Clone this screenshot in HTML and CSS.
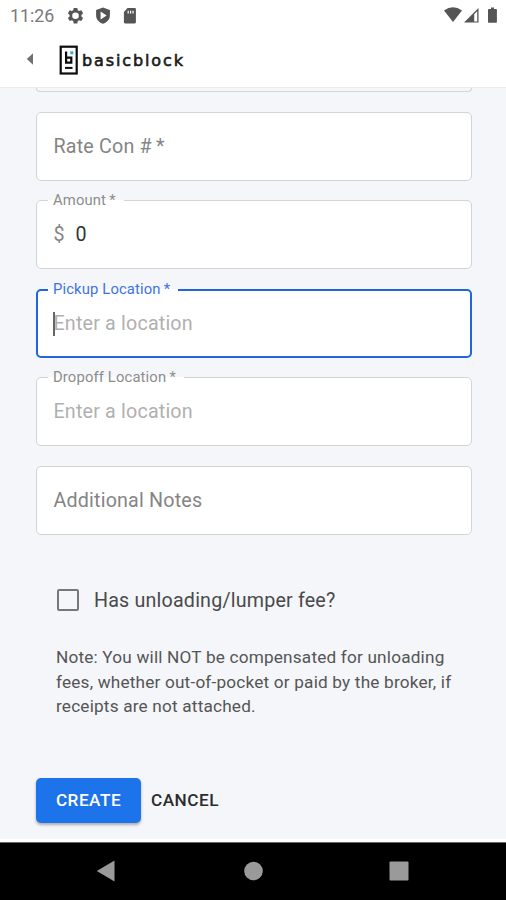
FILE: index.html
```html
<!DOCTYPE html>
<html lang="en">
<head>
<meta charset="utf-8">
<title>basicblock</title>
<link rel="stylesheet" href="styles.css">
</head>
<body>
<div class="screen">
  <header class="top">
    <div class="status">
      <span class="time">11:26</span>
      <svg class="status-left" width="72" height="18" viewBox="0 0 72 18" fill="#555">
        <path fill-rule="evenodd" d="M6.700 1h3.600l.5 2.300 1.300.8 2.200-.8 1.800 3-1.700 1.600v1.600l1.700 1.600-1.800 3-2.200-.8-1.300.8-.5 2.300H6.700l-.5-2.300-1.300-.8-2.200.8-1.800-3 1.700-1.600V7.900L.9 6.300l1.800-3 2.200.8 1.300-.8zM8.500 5.400a3.300 3.300 0 1 0 0 6.600 3.300 3.300 0 0 0 0-6.600z"/>
        <path fill-rule="evenodd" d="M36 .6l6.900 2.400v5.500c0 3.900-2.800 6.900-6.900 8.200-4.100-1.300-6.900-4.300-6.900-8.200V3zM33.600 4.500v8l6-4z"/>
        <path fill-rule="evenodd" d="M67.700 1h-7.200L56.900 5v10.300c0 .7.500 1.200 1.200 1.200h9.600c.7 0 1.200-.5 1.200-1.200V2.200c0-.7-.5-1.200-1.200-1.200zM60.600 3.800h1.200v2.800h-1.200zM63 3.800h1.200v2.800H63zM65.400 3.800h1.200v2.800h-1.200z"/>
      </svg>
      <svg class="status-right" width="54" height="17" viewBox="0 0 54 17" fill="#555">
        <path d="M0 3.600Q9-3 18 3.600L9 15z"/>
        <path d="M20 15.500L34.500 1v14.500z"/>
        <path d="M30.200 7.200l3-3v10.200h-3z" fill="#fff"/>
        <path d="M45 2h2V.5h3V2h1.900c.6 0 1 .4 1 1v11.700c0 .6-.4 1-1 1H45c-.6 0-1-.4-1-1V3c0-.6.4-1 1-1z"/>
      </svg>
    </div>
    <div class="brand">
      <svg class="back" width="8" height="12" viewBox="0 0 8 12"><path d="M7 .3v11.400L.8 6z" fill="#707070"/></svg>
      <svg class="mark" width="20" height="30" viewBox="0 0 20 30">
        <rect x="1.700" y="1.700" width="16" height="26.800" fill="#fff" stroke="#0b0b0b" stroke-width="2.200"/>
        <path d="M7.100 6.500v11.200h5.200v-5H7.100" fill="none" stroke="#0b0b0b" stroke-width="2.200"/>
        <path d="M6 22.900h7.500" stroke="#0b0b0b" stroke-width="2"/>
        <rect x="11.300" y="6.300" width="3" height="3" fill="#35a9df"/>
      </svg>
      <svg class="word" width="104" height="20" viewBox="0 0 104 20"><text x="0" y="15" textLength="101" lengthAdjust="spacing">basicblock</text></svg>
    </div>
  </header>

  <main class="page">
    <form class="form">
      <div class="field clipped"></div>
      <div class="field"><span class="label">Rate Con #&thinsp;*</span></div>
      <div class="field"><span class="legend">Amount&thinsp;*</span><span class="prefix">$</span><span class="value">0</span></div>
      <div class="field focused"><span class="legend">Pickup Location&thinsp;*</span><span class="caret"></span><span class="hint">Enter a location</span></div>
      <div class="field"><span class="legend">Dropoff Location&thinsp;*</span><span class="hint">Enter a location</span></div>
      <div class="field"><span class="label">Additional Notes</span></div>
    </form>
    <div class="check"><span class="box"></span><span>Has unloading/lumper fee?</span></div>
    <p class="note">Note: You will NOT be compensated for unloading<br>fees, whether out-of-pocket or paid by the broker, if<br>receipts are not attached.</p>
    <div class="actions"><button class="create">CREATE</button><button class="cancel">CANCEL</button></div>
  </main>

  <nav class="nav">
    <svg width="20" height="22" viewBox="0 0 20 22"><path d="M18.500.5v21L.8 11z" fill="#9a9a9a"/></svg>
    <svg width="20" height="20" viewBox="0 0 20 20"><circle cx="10.500" cy="10" r="9.300" fill="#9a9a9a"/></svg>
    <svg width="20" height="20" viewBox="0 0 20 20"><rect x=".5" y=".5" width="19" height="19" rx="1" fill="#9a9a9a"/></svg>
  </nav>
</div>
</body>
</html>
```
FILE: styles.css
```css
* { box-sizing: border-box; }
body { margin: 0; font-family: Roboto, sans-serif; }
.screen { width: 506px; height: 900px; display: flex; flex-direction: column; background: #f4f6fa; overflow: hidden; }
.top { height: 88px; flex: none; background: #fff; border-bottom: 1px solid #ededee; }
.status { height: 32px; display: flex; align-items: center; padding: 0 8px 0 10px; }
.time { width: 57px; font-size: 17.800px; line-height: 32px; color: #7a7a7a; }
.status-left { margin-top: -1px; }
.status-right { margin-left: auto; margin-top: -2px; }
.brand { height: 54px; display: flex; align-items: center; padding: 2px 0 0 26px; }
.back { margin-top: -2px; }
.mark { margin-left: 25px; }
.word { margin-left: 3px; margin-top: 1px; }
.word text { font: 16px "DejaVu Sans", sans-serif; fill: #1a1a1a; stroke: #1a1a1a; stroke-width: .6px; }
.page { height: 754px; flex: none; border-bottom: 3px solid #fff; }
.form { display: flex; flex-direction: column; gap: 19.600px; padding: 0 34px 0 36px; }
.field { position: relative; height: 69px; margin: 0; padding: 0 16px 0 16.500px; display: flex; align-items: center; border: 1.500px solid #d3d4d6; border-radius: 5px; background: #fff; font-size: 19.700px; letter-spacing: .18px; }
.field.clipped { height: 3.950px; border-top: 0; border-radius: 0 0 5px 5px; background: #f4f6fa; }
.field.focused { border: 2px solid #2165dd; padding-left: 15.500px; }
.legend { position: absolute; left: 11px; top: -10px; padding: 0 8px 0 5px; font-size: 14.800px; line-height: 18px; color: #8c8c8c; background: linear-gradient(#f4f6fa 50%, #fff 50%); white-space: nowrap; letter-spacing: .14px; }
.focused .legend { left: 10px; top: -11px; color: #3b73e6; }
.label { color: #858585; }
.prefix { color: #858585; width: 22px; }
.value { color: #333; }
.hint { color: #b0b0b0; }
.caret { position: absolute; left: 15px; top: 21px; width: 2px; height: 24px; background: #666; }
.check { display: flex; align-items: center; height: 30px; margin: 50.500px 0 0 57px; font-size: 19.700px; letter-spacing: .18px; color: #4a4a4a; }
.box { width: 22px; height: 22px; border: 2px solid #777; border-radius: 2px; margin-right: 15px; }
.note { margin: 30px 0 0 56px; font-size: 17.200px; line-height: 24.400px; letter-spacing: .19px; color: #555; }
.actions { display: flex; align-items: center; margin: 59px 0 0 36px; }
button { border: 0; padding: 0; font: 500 17.200px Roboto, sans-serif; letter-spacing: .49px; }
.create { width: 105px; height: 45px; color: #fff; background: #1d73ea; border-radius: 5px; box-shadow: 0 2px 3px rgba(0,0,0,.3); }
.cancel { margin-left: 10px; color: #2c2c2c; background: none; }
.nav { height: 58px; flex: none; background: #000; border-top: 1px solid #666; display: flex; align-items: center; justify-content: space-between; padding: 0 97px 1px 96px; }
```
